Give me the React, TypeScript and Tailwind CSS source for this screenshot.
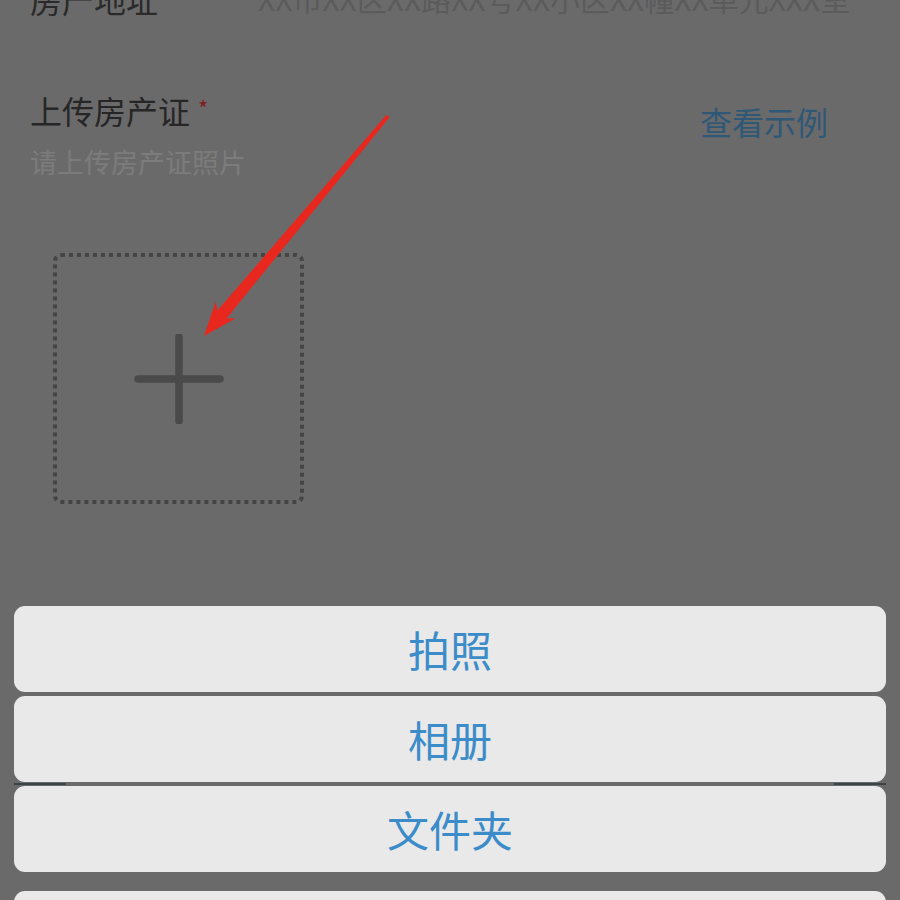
import React from "react";

const font = { fontFamily: '"Noto Sans CJK SC", "Noto Sans", sans-serif' };

export default function App() {
  const buttonCls =
    "h-[86px] w-full rounded-[11px] bg-[#e9e9ea] flex items-center justify-center text-[42px] leading-[42px] text-[#3b8cc9]";
  return (
    <div
      className="relative w-[900px] h-[900px] overflow-hidden bg-[#6b6a6b]"
      style={font}
    >
      {/* form content */}
      <div className="flex flex-col px-[30px]">
        <div className="mt-[-17px] flex h-[32px] items-start">
          <div className="w-[228px] text-[32px] leading-[32px] text-[#2a2a2a]">
            房产地址
          </div>
          <div className="mt-[0px] whitespace-nowrap text-[30px] leading-[30px] text-[#5b5b5b]">
            XX市XX区XX路XX号XX小区XX幢XX单元XXX室
          </div>
        </div>

        <div className="mt-[79px] flex items-start justify-between pr-[42px]">
          <div className="flex items-start">
            <span className="text-[32px] leading-[32px] text-[#262626]">
              上传房产证
            </span>
            <span className="ml-[8px] mt-[2px] text-[22px] leading-[22px] text-[#7d1d1f]">
              *
            </span>
          </div>
          <span className="mt-[11px] text-[32px] leading-[32px] text-[#2f5877]">
            查看示例
          </span>
        </div>

        <div className="mt-[11px] text-[27px] leading-[27px] text-[#7c7c7c]">
          请上传房产证照片
        </div>

        <div className="relative ml-[23px] mt-[78px] flex h-[251px] w-[251px] items-center justify-center">
          <svg
            className="absolute inset-0"
            width="251"
            height="251"
            viewBox="0 0 251 251"
          >
            <rect
              x="2"
              y="2"
              width="247"
              height="247"
              rx="6"
              fill="none"
              stroke="#454545"
              strokeWidth="4"
              strokeDasharray="4 4"
            />
          </svg>
          <svg width="90" height="90" viewBox="0 0 90 90">
            <line
              x1="4"
              y1="45"
              x2="86"
              y2="45"
              stroke="#4a4a4a"
              strokeWidth="7.5"
              strokeLinecap="round"
            />
            <line
              x1="45"
              y1="3"
              x2="45"
              y2="87"
              stroke="#4a4a4a"
              strokeWidth="7.5"
              strokeLinecap="round"
            />
          </svg>
        </div>
      </div>

      {/* red annotation arrow */}
      <svg
        className="absolute left-0 top-0 pointer-events-none"
        width="900"
        height="900"
        viewBox="0 0 900 900"
      >
        <polygon
          points="204,336 235.8,318.2 226.6,318.4 389.5,117.3 386.5,114.7 217.4,310.6 215.8,301.6"
          fill="#e8281f"
        />
      </svg>

      {/* action sheet overlay */}
      <div className="absolute left-[14px] right-[14px] top-[606px] flex flex-col">
        <div className={buttonCls}>拍照</div>
        <div className="h-[4px]" />
        <div className={buttonCls}>相册</div>
        <div className="flex h-[4px] items-center justify-between">
          <div className="h-[2px] w-[52px] bg-[#3c4346]" />
          <div className="h-[2px] w-[52px] bg-[#3c4346]" />
        </div>
        <div className={buttonCls}>文件夹</div>
        <div className="h-[19px]" />
        <div className={buttonCls}>取消</div>
      </div>
    </div>
  );
}
